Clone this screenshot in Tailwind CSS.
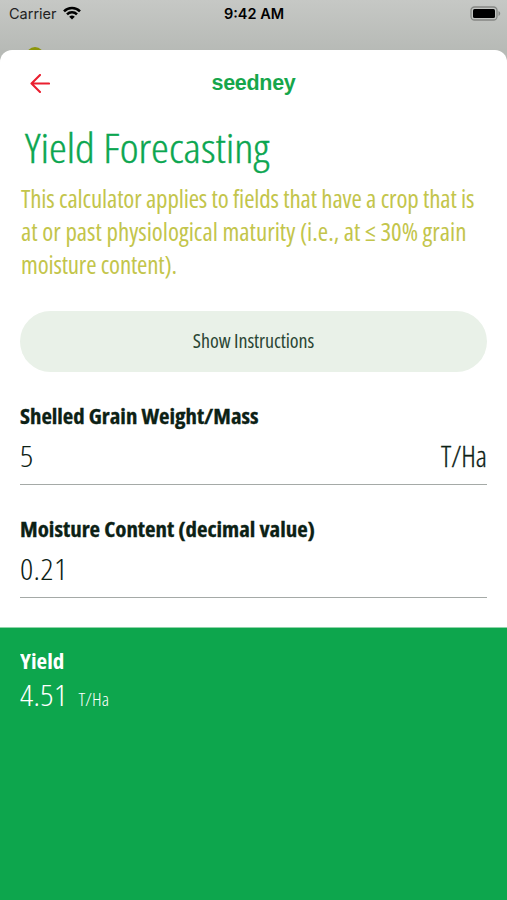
<!DOCTYPE html>
<html lang="en">
<head>
    <meta charset="UTF-8">
    <meta name="viewport" content="width=device-width, initial-scale=1.0">
    <title>Yield Forecasting</title>
    <script src="https://cdn.jsdelivr.net/npm/@tailwindcss/browser@4"></script>
</head>
<body class="bg-[#bcbfbb] font-['Open_Sans',sans-serif] [font-stretch:75%]">
    <div class="flex flex-col h-[900px] overflow-hidden bg-linear-to-b from-[#c6c8c5] from-0% to-[#b7bab6] to-[50px]">
        <!-- Status bar -->
        <div class="relative grid grid-cols-3 items-center h-[50px] shrink-0 pl-[9px] pr-[6px] pb-[22px] font-['Inter',sans-serif] text-[14.5px] leading-none text-[#222]">
            <div class="flex items-center gap-[6px]">
                <span>Carrier</span>
                <svg class="w-[18px] h-[14px] mb-[2px]" viewBox="0 0 18 14" fill="none" stroke="#000" stroke-width="2.5">
                    <path d="M1 5.3a11.3 11.3 0 0 1 16 0"/>
                    <path d="M4 8.4a7 7 0 0 1 10 0"/>
                    <path d="M9 13.6 6.2 10.8a4 4 0 0 1 5.6 0z" fill="#000" stroke="none"/>
                </svg>
            </div>
            <span class="-ml-[2px] text-center font-semibold text-black">9:42 AM</span>
            <svg class="w-[31px] h-[15px] mb-px justify-self-end" viewBox="0 0 31 15">
                <rect x="1" y="1" width="26" height="13" rx="3.5" fill="none" stroke="#858784" stroke-width="1.3"/>
                <rect x="3" y="3" width="22" height="9" rx="1.5" fill="#000"/>
                <path d="M28.5 5v5c1-.4 1.7-1.4 1.7-2.5S29.5 5.4 28.5 5z" fill="#858784"/>
            </svg>
            <!-- Sliver of the screen behind the sheet -->
            <div class="absolute left-[26px] bottom-0 w-[18px] h-[3px] overflow-hidden">
                <div class="w-[18px] h-[18px] rounded-full bg-[#8c9509]"></div>
            </div>
        </div>

        <!-- Sheet -->
        <div class="flex flex-col grow rounded-t-[12px] bg-white overflow-hidden">
            <header class="grid grid-cols-3 items-center h-[68px] shrink-0 px-[21px]">
                <svg class="ml-[9px] w-5 h-5" viewBox="0 0 20 20" fill="none" stroke="#ea1f2f" stroke-width="2.1" stroke-linecap="round" stroke-linejoin="round">
                    <path d="M19 9.5H1.5M10 1 1.5 9.5 10 18"/>
                </svg>
                <span class="pb-px text-center font-['Liberation_Sans',sans-serif] font-bold text-[21.5px] tracking-[-0.3px] leading-none text-[#16a64b]">seedney</span>
            </header>

            <div class="px-[20px] pt-[5px]">
                <h1 class="ml-[5px] origin-left scale-x-[1.1] w-max text-[41px] leading-[48px] font-light text-[#0ba650] [-webkit-text-stroke:0.4px_#0ba650]">Yield Forecasting</h1>
                <p class="mt-[11px] ml-px text-[25px] leading-[33px] text-[#c3c54b] whitespace-nowrap">
                    <span class="tracking-[-0.16px]">This calculator applies to fields that have a crop that is</span><br>
                    <span>at or past physiological maturity (i.e., at ≤ 30% grain</span><br>
                    <span class="tracking-[-0.2px]">moisture content).</span>
                </p>
                <button class="mt-[30px] block w-[467px] h-[61px] pb-[2px] rounded-full bg-[#e9f1e8] text-[20px] tracking-[-0.07px] text-[#2a4634]">Show Instructions</button>

                <div class="mt-[28px] flex flex-col gap-[28px] w-[467px] text-[#0c2115]">
                    <div class="h-[85px] border-b border-[#a5aaa7]">
                        <label class="block origin-left scale-x-[1.036] w-max text-[22px] leading-[30px] font-bold [-webkit-text-stroke:0.3px_#0c2115]">Shelled Grain Weight/Mass</label>
                        <div class="mt-[6px] flex justify-between text-[29px] leading-[40px] font-light">
                            <span class="origin-left scale-x-[1.12]">5</span>
                            <span class="[-webkit-text-stroke:0.3px_#0c2115]">T/Ha</span>
                        </div>
                    </div>
                    <div class="h-[85px] border-b border-[#a5aaa7]">
                        <label class="block origin-left scale-x-[1.04] w-max text-[22px] leading-[30px] font-bold [-webkit-text-stroke:0.3px_#0c2115]">Moisture Content (decimal value)</label>
                        <div class="mt-[6px] origin-left scale-x-[1.12] w-max text-[29px] leading-[40px] font-light tracking-[0.3px]">0.21</div>
                    </div>
                </div>
            </div>

            <!-- Result -->
            <div class="mt-[29px] grow border-t border-[#8fd4a9] bg-[#0da64d] px-[20px] pt-[17px] text-white">
                <div class="origin-left scale-x-[1.05] w-max text-[22px] leading-[30px] font-bold">Yield</div>
                <div class="flex items-baseline gap-[16px] leading-[40px] font-light">
                    <span class="origin-left scale-x-[1.12] text-[29px] tracking-[0.3px]">4.51</span>
                    <span class="text-[19px] tracking-[0.2px]">T/Ha</span>
                </div>
            </div>
        </div>
    </div>
</body>
</html>
